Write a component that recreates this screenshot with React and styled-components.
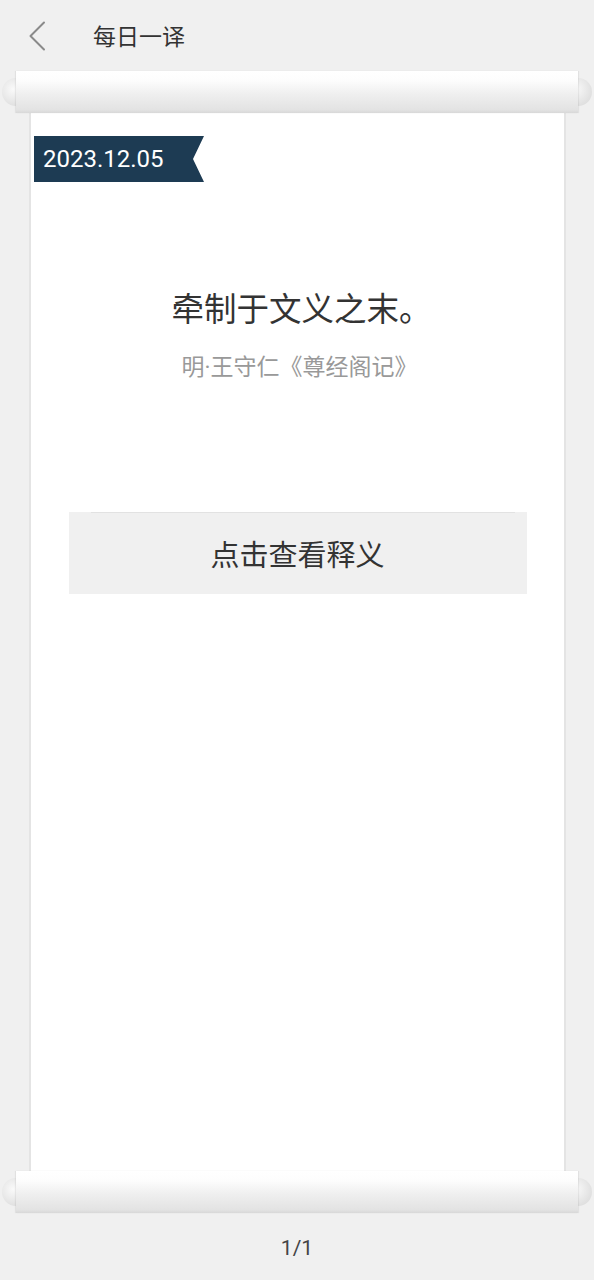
import React from "react";
import styled, { createGlobalStyle } from "styled-components";

const Global = createGlobalStyle`
  html, body { margin: 0; padding: 0; background: #f0f0f0; }
  body { font-family: "Noto Sans CJK SC", "Noto Sans", Roboto, sans-serif; }
  * { box-sizing: border-box; }
`;

const Page = styled.div`
  width: 594px;
  height: 1280px;
  background: #f0f0f0;
  display: flex;
  flex-direction: column;
  overflow: hidden;
`;

const Header = styled.header`
  height: 71px;
  display: flex;
  align-items: center;
  padding-left: 27px;
`;

const BackButton = styled.button`
  width: 20px;
  height: 32px;
  padding: 0;
  border: 0;
  background: none;
  display: flex;
  align-items: center;
  justify-content: center;
`;

const Title = styled.h1`
  margin: 0 0 0 46px;
  font-size: 23px;
  font-weight: 400;
  color: #333;
  line-height: 1;
`;

const Scroll = styled.div`
  display: flex;
  flex-direction: column;
`;

const RollerRow = styled.div`
  height: 42px;
  display: flex;
  align-items: center;
  padding: 0 2px;
`;

const Knob = styled.div`
  width: 28px;
  height: 28px;
  border-radius: 50%;
  flex-shrink: 0;
  background: radial-gradient(circle at 40% 40%, #fafafa 0%, #e6e6e6 55%, #d6d6d6 100%);
  margin: ${(p) => (p.$side === "left" ? "0 -14px 0 0" : "0 0 0 -14px")};
`;

const Bar = styled.div`
  position: relative;
  z-index: 1;
  flex: 1;
  height: 100%;
  background: linear-gradient(to bottom, #ffffff 0%, #fdfdfd 22%, #efefef 55%, #e3e3e3 92%, #d8d8d8 100%);
  box-shadow: -1px 0 1px rgba(0, 0, 0, 0.06), 1px 0 1px rgba(0, 0, 0, 0.06);
`;

const Paper = styled.div`
  height: 1058px;
  margin: 0 28px 0 29px;
  background: #fff;
  border-left: 2px solid #e4e4e4;
  border-right: 2px solid #e4e4e4;
  padding-top: 23px;
  display: flex;
  flex-direction: column;
`;

const DateRibbon = styled.div`
  width: 170px;
  height: 46px;
  margin-left: 3px;
  background: #1d3b53;
  color: #fff;
  font-family: Roboto, "Noto Sans", sans-serif;
  font-size: 24px;
  display: flex;
  align-items: center;
  padding-left: 9px;
  clip-path: polygon(0 0, 100% 0, calc(100% - 11px) 50%, 100% 100%, 0 100%);
`;

const Quote = styled.p`
  margin: 104px 0 0;
  text-align: center;
  font-size: 32.5px;
  line-height: 42px;
  color: #333;
  padding-left: 8px;
`;

const Source = styled.p`
  margin: 25px 0 0;
  text-align: center;
  font-family: Roboto, "Noto Sans CJK SC", sans-serif;
  font-size: 23px;
  line-height: 30px;
  color: #999;
  padding-left: 4px;
`;

const RevealButton = styled.button`
  position: relative;
  margin: 129px auto 0;
  width: 458px;
  height: 82px;
  border: 0;
  background: #f0f0f0;
  font-family: inherit;
  font-size: 29px;
  color: #333;
  display: flex;
  align-items: center;
  justify-content: center;
  &::before {
    content: "";
    position: absolute;
    left: 22px;
    right: 12px;
    top: 0;
    height: 1px;
    background: #e2e2e2;
  }
`;

const Pager = styled.div`
  flex: 1;
  display: flex;
  align-items: center;
  justify-content: center;
  font-family: Roboto, "Noto Sans", sans-serif;
  font-size: 21px;
  color: #444;
  padding-top: 2px;
`;

function Roller() {
  return (
    <RollerRow>
      <Knob $side="left" />
      <Bar />
      <Knob $side="right" />
    </RollerRow>
  );
}

export default function App() {
  return (
    <>
      <Global />
      <Page>
        <Header>
          <BackButton aria-label="返回">
            <svg width="18" height="30" viewBox="0 0 18 30" fill="none">
              <path d="M16 1.5 L2.5 15 L16 28.5" stroke="#8a8a8a" strokeWidth="2" strokeLinecap="round" strokeLinejoin="round" />
            </svg>
          </BackButton>
          <Title>每日一译</Title>
        </Header>
        <Scroll>
          <Roller />
          <Paper>
            <DateRibbon>2023.12.05</DateRibbon>
            <Quote>牵制于文义之末。</Quote>
            <Source>明·王守仁《尊经阁记》</Source>
            <RevealButton>点击查看释义</RevealButton>
          </Paper>
          <Roller />
        </Scroll>
        <Pager>1/1</Pager>
      </Page>
    </>
  );
}
